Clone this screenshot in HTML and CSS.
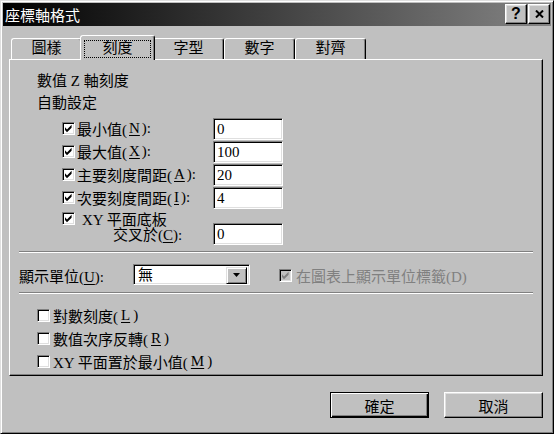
FILE: index.html
```html
<!DOCTYPE html>
<html lang="zh-Hant">

<head>
    <meta charset="UTF-8">
    <title>座標軸格式</title>
    <link rel="stylesheet" href="styles.css">
</head>

<body>
    <div class="window">
        <div class="titlebar">
            <span class="title">座標軸格式</span>
            <div class="title-btns">
                <span class="tbtn help">?</span>
                <span class="tbtn close">
                    <svg width="9" height="8" viewBox="0 0 9 8">
                        <path d="M1 0.5 L8 7.5 M8 0.5 L1 7.5" stroke="#000" stroke-width="2" />
                    </svg>
                </span>
            </div>
        </div>

        <div class="content">
            <div class="tabs">
                <div class="tab">圖樣</div>
                <div class="tab active"><span class="focus">刻度</span></div>
                <div class="tab">字型</div>
                <div class="tab">數字</div>
                <div class="tab">對齊</div>
            </div>

            <div class="panel">
                <div class="heading first">數值 Z 軸刻度</div>
                <div class="heading">自動設定</div>

                <div class="row auto">
                    <span class="opt"><span class="check on"></span>最小值(<u>N</u>):</span>
                    <input class="field" type="text" value="0">
                </div>
                <div class="row">
                    <span class="opt"><span class="check on"></span>最大值(<u>X</u>):</span>
                    <input class="field" type="text" value="100">
                </div>
                <div class="row">
                    <span class="opt"><span class="check on"></span>主要刻度間距(<u>A</u>):</span>
                    <input class="field" type="text" value="20">
                </div>
                <div class="row">
                    <span class="opt"><span class="check on"></span>次要刻度間距(<u>I</u>):</span>
                    <input class="field" type="text" value="4">
                </div>
                <div class="row short">
                    <span class="opt"><span class="check on"></span><span class="xy">XY 平面底板</span></span>
                </div>
                <div class="row cross">
                    <span class="cross-label">交叉於(<u>C</u>):</span>
                    <input class="field" type="text" value="0">
                </div>

                <div class="sep"></div>

                <div class="unit-row">
                    <span class="unit-label">顯示單位(<u>U</u>):</span>
                    <div class="select">
                        <span class="select-value">無</span>
                        <span class="select-btn">
                            <svg width="7" height="4" viewBox="0 0 7 4">
                                <path d="M0 0 H7 L3.5 4 Z" fill="#000" />
                            </svg>
                        </span>
                    </div>
                    <span class="opt disabled"><span class="check on"></span>在圖表上顯示單位標籤(D)</span>
                </div>

                <div class="sep second"></div>

                <div class="options">
                    <span class="opt wide"><span class="check"></span>對數刻度(<u>L</u>)</span>
                    <span class="opt wide"><span class="check"></span>數值次序反轉(<u>R</u>)</span>
                    <span class="opt wide"><span class="check"></span>XY 平面置於最小值(<u>M</u>)</span>
                </div>
            </div>

            <div class="buttons">
                <button class="btn default">確定</button>
                <button class="btn">取消</button>
            </div>
        </div>
    </div>
</body>

</html>
```

FILE: styles.css
```css
* {
    box-sizing: border-box;
}

body {
    margin: 0;
    width: 554px;
    height: 434px;
    overflow: hidden;
    background-color: #c0c0c0;
    font-family: "Liberation Serif", "Noto Sans CJK TC", serif;
    font-size: 15px;
    color: #000;
}

u {
    text-decoration-thickness: 1px;
    text-underline-offset: 2px;
}

.window {
    width: 554px;
    height: 434px;
    border: 1px solid;
    border-color: #dfdfdf #000 #000 #dfdfdf;
    box-shadow: inset 1px 1px #fff, inset -1px -1px #808080;
    padding: 2px;
}

/* title bar */

.titlebar {
    height: 23px;
    display: flex;
    justify-content: space-between;
    padding: 0 1px 0 2px;
    background: linear-gradient(to right, #000 0%, #2e2e2e 35%, #848484 100%);
}

.title {
    color: #fff;
    font-family: "Noto Sans CJK TC", sans-serif;
    line-height: 23px;
}

.title-btns {
    display: flex;
    gap: 1px;
    margin-top: 1px;
}

.tbtn {
    width: 22px;
    height: 20px;
    display: flex;
    align-items: center;
    justify-content: center;
    background-color: #c0c0c0;
    border: 1px solid;
    border-color: #fff #000 #000 #fff;
    box-shadow: inset -1px -1px #808080, inset 1px 1px #dfdfdf;
}

.tbtn.help {
    font-family: "Liberation Sans", sans-serif;
    font-weight: bold;
    font-size: 16px;
    line-height: 1;
}

/* tabs */

.content {
    padding: 9px 8px 0 6px;
}

.tabs {
    display: flex;
    align-items: flex-end;
    height: 24px;
    margin-left: 2px;
}

.tab {
    width: 71px;
    height: 21px;
    border: 1px solid;
    border-bottom: none;
    border-color: #fff #000 transparent #fff;
    border-radius: 3px 3px 0 0;
    box-shadow: inset -1px 0 #808080;
    text-align: center;
    line-height: 19px;
}

.tab.active {
    position: relative;
    z-index: 1;
    width: 75px;
    height: 25px;
    margin: 0 -2px -1px;
    padding-top: 3px;
    background-color: #c0c0c0;
}

.focus {
    display: inline-block;
    width: 67px;
    height: 18px;
    border: 1px dotted #000;
    line-height: 15px;
}

/* panel */

.panel {
    height: 317px;
    border: 1px solid;
    border-color: #fff #000 #000 #fff;
    box-shadow: inset -1px -1px #808080;
}

.heading {
    height: 22px;
    line-height: 22px;
    padding-left: 27px;
}

.heading.first {
    margin-top: 10px;
}

.row {
    display: grid;
    grid-template-columns: 151px 70px;
    align-items: center;
    height: 23px;
    padding-left: 52px;
}

.row.auto {
    margin-top: 3px;
}

.row.short {
    height: 13px;
    margin-top: -1px;
}

.row.cross {
    margin-top: 1px;
}

.cross-label {
    padding-left: 51px;
}

.opt {
    display: flex;
    align-items: center;
    gap: 2px;
    white-space: nowrap;
}

.xy {
    margin-left: 5px;
}

.check {
    flex: none;
    width: 13px;
    height: 13px;
    border: 1px solid;
    border-color: #808080 #fff #fff #808080;
    box-shadow: inset 1px 1px #000, inset -1px -1px #dfdfdf;
    background-color: #fff;
}

.check.on {
    background-image: url("data:image/svg+xml,%3Csvg xmlns='http://www.w3.org/2000/svg' width='11' height='11' viewBox='0 0 11 11'%3E%3Cpath d='M2 4.2 L4 6.4 L8.6 1.8 V4.8 L4 9.2 L2 7 Z' fill='%23000'/%3E%3C/svg%3E");
    background-repeat: no-repeat;
}

.field {
    width: 70px;
    height: 22px;
    margin: 0;
    padding: 1px 3px 0;
    border: 1px solid;
    border-color: #808080 #fff #fff #808080;
    box-shadow: inset 1px 1px #000, inset -1px -1px #dfdfdf;
    background-color: #fff;
    font: inherit;
    outline: none;
}

.sep {
    height: 2px;
    margin: 6px 9px 0;
    border-top: 1px solid #808080;
    border-bottom: 1px solid #fff;
}

.sep.second {
    margin-top: 7px;
}

.unit-row {
    display: flex;
    align-items: center;
    height: 22px;
    margin-top: 10px;
    padding-left: 9px;
}

.unit-label {
    width: 114px;
    padding-top: 3px;
}

.select {
    width: 117px;
    height: 21px;
    display: flex;
    justify-content: space-between;
    padding: 2px;
    border: 1px solid;
    border-color: #808080 #fff #fff #808080;
    box-shadow: inset 1px 1px #000, inset -1px -1px #dfdfdf;
    background-color: #fff;
}

.select-value {
    padding-left: 2px;
    line-height: 17px;
}

.select-btn {
    width: 21px;
    height: 17px;
    display: flex;
    align-items: center;
    justify-content: center;
    background-color: #c0c0c0;
    border: 1px solid;
    border-color: #dfdfdf #000 #000 #dfdfdf;
    box-shadow: inset 1px 1px #fff, inset -1px -1px #808080;
}

.opt.disabled {
    margin-left: 29px;
    gap: 4px;
    color: #808080;
    padding-top: 2px;
}

.opt.disabled .check {
    background-color: #c0c0c0;
    background-image: url("data:image/svg+xml,%3Csvg xmlns='http://www.w3.org/2000/svg' width='11' height='11' viewBox='0 0 11 11'%3E%3Cpath d='M2 4.2 L4 6.4 L8.6 1.8 V4.8 L4 9.2 L2 7 Z' fill='%23808080'/%3E%3C/svg%3E");
}

.options {
    margin-top: 10px;
    padding-left: 27px;
}

.opt.wide {
    height: 23px;
    gap: 3px;
}

/* buttons */

.buttons {
    display: flex;
    justify-content: flex-end;
    gap: 15px;
    margin-top: 16px;
}

.btn {
    width: 99px;
    height: 26px;
    padding: 0;
    background-color: #c0c0c0;
    border: 1px solid;
    border-color: #fff #000 #000 #fff;
    box-shadow: inset -1px -1px #808080, inset 1px 1px #dfdfdf;
    font: inherit;
    color: #000;
}

.btn.default {
    border-color: #000;
    box-shadow: inset 1px 1px #fff, inset -1px -1px #000, inset -2px -2px #808080;
}
```
